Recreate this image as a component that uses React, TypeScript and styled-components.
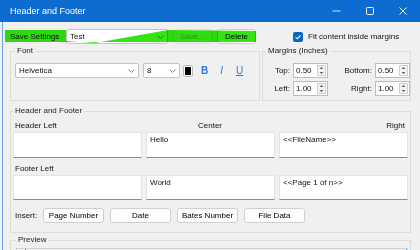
import React from 'react'
import styled, { createGlobalStyle } from 'styled-components'

const GlobalStyle = createGlobalStyle`
  html, body {
    margin: 0;
    padding: 0;
    background: #f0f0f0;
  }
  body {
    width: 420px;
    height: 250px;
    overflow: hidden;
    font-family: 'Liberation Sans', Arial, sans-serif;
    color: #111;
  }
`

const Window = styled.div`
  position: relative;
  width: 420px;
  height: 250px;
  overflow: hidden;
  background: #f0f0f0;
`

const TitleBar = styled.div`
  display: flex;
  align-items: center;
  height: 22px;
  background: #0c6cd0;
  color: #fff;
`

const Title = styled.div`
  flex: 1;
  padding-left: 10px;
  font-size: 9px;
`

const Controls = styled.div`
  display: flex;
  height: 22px;
`

const ControlButton = styled.div<{ $w: number }>`
  width: ${p => p.$w}px;
  display: flex;
  align-items: center;
  justify-content: center;
`

const Body = styled.div`
  display: flex;
  flex-direction: column;
  margin-left: 2px;
  border-left: 1px solid #6aa6e6;
  padding: 7px 9px 0 7px;
  height: 228px;
  box-sizing: border-box;
  font-size: 8px;
`

const SaveRow = styled.div`
  display: flex;
  align-items: center;
  height: 15px;
`

const RowLabel = styled.span<{ $w?: number }>`
  width: ${p => (p.$w ? `${p.$w}px` : 'auto')};
  flex-shrink: 0;
  white-space: nowrap;
`

const Combo = styled.div<{ $w: number }>`
  width: ${p => p.$w}px;
  height: 15px;
  box-sizing: border-box;
  display: flex;
  align-items: center;
  justify-content: space-between;
  padding: 0 3px 0 3px;
  background: #fff;
  border: 1px solid #c4c4c4;
  border-radius: 2px;
  flex-shrink: 0;
`

const Button = styled.button<{ $disabled?: boolean }>`
  height: 15px;
  width: 39px;
  padding: 0;
  margin-left: 5px;
  font: 8px 'Liberation Sans', Arial, sans-serif;
  color: ${p => (p.$disabled ? '#a8a8a8' : '#000')};
  background: ${p => (p.$disabled ? '#f4f4f4' : '#fdfdfd')};
  border: 1px solid ${p => (p.$disabled ? '#dedede' : '#cfcfcf')};
  border-radius: 3px;
`

const CheckWrap = styled.label`
  display: flex;
  align-items: center;
  gap: 5px;
  margin-left: 37px;
  white-space: nowrap;
`

const TopGroups = styled.div`
  display: flex;
  gap: 2px;
  margin-top: 2px;
`

const Group = styled.fieldset`
  margin: 0;
  min-width: 0;
  border: 1px solid #dcdcdc;
  box-sizing: border-box;
`

const Legend = styled.legend`
  padding: 0 2px;
  font-size: 8px;
  line-height: 10px;
  color: #1a1a1a;
`

const FontGroup = styled(Group)`
  width: 250px;
  padding: 7px 4px 0 4px;
`

const FontRow = styled.div`
  display: flex;
  align-items: center;
  gap: 4px;
`

const Swatch = styled.div`
  width: 10px;
  height: 12px;
  box-sizing: border-box;
  margin-left: -1px;
  border: 1px solid #b9b9b9;
  border-radius: 2px;
  background: #fff;
  display: flex;
  align-items: center;
  justify-content: center;

  &::after {
    content: '';
    width: 6px;
    height: 8px;
    background: #000;
  }
`

const StyleToggle = styled.span<{ $bold?: boolean; $italic?: boolean; $underline?: boolean; $ml: number }>`
  margin-left: ${p => p.$ml}px;
  color: #2a7bd6;
  font-size: 10px;
  font-weight: ${p => (p.$bold ? 700 : 400)};
  font-style: ${p => (p.$italic ? 'italic' : 'normal')};
  text-decoration: ${p => (p.$underline ? 'underline' : 'none')};
`

const MarginsGroup = styled(Group)`
  flex: 1;
  padding: 7px 3px 4px 3px;
`

const MarginsGrid = styled.div`
  display: grid;
  grid-template-columns: 24px 35px 41px 35px;
  grid-template-rows: 15px 15px;
  column-gap: 3px;
  row-gap: 3px;
  align-items: center;
`

const MarginLabel = styled.span`
  text-align: right;
`

const Spinner = styled.div`
  height: 15px;
  box-sizing: border-box;
  display: flex;
  align-items: center;
  justify-content: space-between;
  padding: 0 1px 0 2px;
  background: #fff;
  border: 1px solid #bcbcbc;
`

const HFGroup = styled(Group)`
  margin-top: 5px;
  padding: 4px 2px 9px 2px;
`

const ColumnLabels = styled.div<{ $mt?: number }>`
  display: grid;
  grid-template-columns: repeat(3, 1fr);
  column-gap: 4px;
  height: 11px;
  line-height: 11px;
  margin-top: ${p => p.$mt ?? 0}px;
  margin-bottom: 1px;
  padding: 0 3px 0 2px;
`

const ColLabel = styled.span<{ $align: 'left' | 'center' | 'right' }>`
  text-align: ${p => p.$align};
`

const BoxRow = styled.div`
  display: grid;
  grid-template-columns: repeat(3, 1fr);
  column-gap: 4px;
`

const TextBox = styled.div<{ $h: number }>`
  height: ${p => p.$h}px;
  box-sizing: border-box;
  padding: 2px 3px;
  line-height: 10px;
  background: #fff;
  border: 1px solid #e4e4e4;
  border-bottom-color: #8d8d8d;
`

const InsertRow = styled.div`
  display: flex;
  align-items: center;
  gap: 6px;
  margin-top: 8px;
  padding-left: 2px;
`

const InsertButton = styled.button`
  width: 61px;
  height: 15px;
  padding: 0;
  font: 8px 'Liberation Sans', Arial, sans-serif;
  color: #000;
  background: #fdfdfd;
  border: 1px solid #d0d0d0;
  border-radius: 3px;
`

const PreviewGroup = styled(Group)`
  margin-top: 2px;
  padding: 3px 2px 0 5px;
  flex: 1;
`

const PreviewArea = styled.div`
  height: 20px;
  display: flex;
  justify-content: space-between;
  border: 1px solid #cdcdcd;
  background: #f6f6f6;
`

const RulerTick = styled.div<{ $color: string; $ml: number }>`
  width: 1px;
  height: 6px;
  margin-left: ${p => p.$ml}px;
  background: ${p => p.$color};
`

const Highlight = styled.svg`
  position: absolute;
  left: 0;
  top: 0;
  mix-blend-mode: multiply;
  pointer-events: none;
`

const Chevron = () => (
  <svg width="7" height="4" viewBox="0 0 7 4">
    <polyline points="0.5,0.5 3.5,3.5 6.5,0.5" fill="none" stroke="#7a7a7a" strokeWidth="0.9" />
  </svg>
)

const SpinArrows = () => (
  <svg width="9" height="11" viewBox="0 0 9 11">
    <rect x="0.5" y="0.5" width="8" height="10" fill="#f3f3f3" stroke="#d0d0d0" />
    <polygon points="2.5,4 4.5,2 6.5,4" fill="#606060" />
    <polygon points="2.5,7 4.5,9 6.5,7" fill="#606060" />
  </svg>
)

const CheckBox = () => (
  <svg width="10" height="10" viewBox="0 0 10 10">
    <rect x="0" y="0" width="10" height="10" rx="2" fill="#0a64c2" />
    <polyline points="2.6,5.2 4.3,6.8 7.5,3.4" fill="none" stroke="#fff" strokeWidth="1.1" />
  </svg>
)

const margins = [
  { label: 'Top:', value: '0.50', label2: 'Bottom:', value2: '0.50' },
  { label: 'Left:', value: '1.00', label2: 'Right:', value2: '1.00' },
]

const insertItems = ['Page Number', 'Date', 'Bates Number', 'File Data']

export default function App() {
  return (
    <Window>
      <GlobalStyle />
      <TitleBar>
        <Title>Header and Footer</Title>
        <Controls>
          <ControlButton $w={33}>
            <svg width="9" height="2" viewBox="0 0 9 2">
              <line x1="0.5" y1="1" x2="8.5" y2="1" stroke="#cfe2f7" strokeWidth="1" />
            </svg>
          </ControlButton>
          <ControlButton $w={33}>
            <svg width="8" height="8" viewBox="0 0 8 8">
              <rect x="0.5" y="0.5" width="7" height="7" rx="1" fill="none" stroke="#fff" strokeWidth="1" />
            </svg>
          </ControlButton>
          <ControlButton $w={34}>
            <svg width="8" height="8" viewBox="0 0 8 8">
              <path d="M0.5 0.5 L7.5 7.5 M7.5 0.5 L0.5 7.5" stroke="#fff" strokeWidth="1" />
            </svg>
          </ControlButton>
        </Controls>
      </TitleBar>

      <Body>
        <SaveRow>
          <RowLabel $w={56}>Save Settings</RowLabel>
          <Combo $w={102}>
            <span>Test</span>
            <Chevron />
          </Combo>
          <Button $disabled>Save...</Button>
          <Button>Delete</Button>
          <CheckWrap>
            <CheckBox />
            <span>Fit content inside margins</span>
          </CheckWrap>
        </SaveRow>

        <TopGroups>
          <FontGroup>
            <Legend>Font</Legend>
            <FontRow>
              <Combo $w={124}>
                <span>Helvetica</span>
                <Chevron />
              </Combo>
              <Combo $w={37}>
                <span>8</span>
                <Chevron />
              </Combo>
              <Swatch />
              <StyleToggle $bold $ml={4}>B</StyleToggle>
              <StyleToggle $italic $ml={8}>I</StyleToggle>
              <StyleToggle $underline $ml={9}>U</StyleToggle>
            </FontRow>
          </FontGroup>

          <MarginsGroup>
            <Legend>Margins (Inches)</Legend>
            <MarginsGrid>
              {margins.map(m => (
                <React.Fragment key={m.label}>
                  <MarginLabel>{m.label}</MarginLabel>
                  <Spinner>
                    <span>{m.value}</span>
                    <SpinArrows />
                  </Spinner>
                  <MarginLabel>{m.label2}</MarginLabel>
                  <Spinner>
                    <span>{m.value2}</span>
                    <SpinArrows />
                  </Spinner>
                </React.Fragment>
              ))}
            </MarginsGrid>
          </MarginsGroup>
        </TopGroups>

        <HFGroup>
          <Legend>Header and Footer</Legend>
          <ColumnLabels>
            <ColLabel $align="left">Header Left</ColLabel>
            <ColLabel $align="center">Center</ColLabel>
            <ColLabel $align="right">Right</ColLabel>
          </ColumnLabels>
          <BoxRow>
            <TextBox $h={26} />
            <TextBox $h={26}>Hello</TextBox>
            <TextBox $h={26}>&lt;&lt;FileName&gt;&gt;</TextBox>
          </BoxRow>
          <ColumnLabels $mt={5}>
            <ColLabel $align="left">Footer Left</ColLabel>
          </ColumnLabels>
          <BoxRow>
            <TextBox $h={25} />
            <TextBox $h={25}>World</TextBox>
            <TextBox $h={25}>&lt;&lt;Page 1 of n&gt;&gt;</TextBox>
          </BoxRow>
          <InsertRow>
            <RowLabel $w={22}>Insert:</RowLabel>
            {insertItems.map(item => (
              <InsertButton key={item}>{item}</InsertButton>
            ))}
          </InsertRow>
        </HFGroup>

        <PreviewGroup>
          <Legend>Preview</Legend>
          <PreviewArea>
            <RulerTick $color="#7a7a7a" $ml={8} />
            <RulerTick $color="#7fb3e8" $ml={0} />
          </PreviewArea>
        </PreviewGroup>
      </Body>

      <Highlight width="420" height="50" viewBox="0 0 420 50">
        <polygon
          points="5,30 66,30 66,41 95,43 168,30 256,31 256,42 5,42"
          fill="#33e512"
        />
      </Highlight>
    </Window>
  )
}
